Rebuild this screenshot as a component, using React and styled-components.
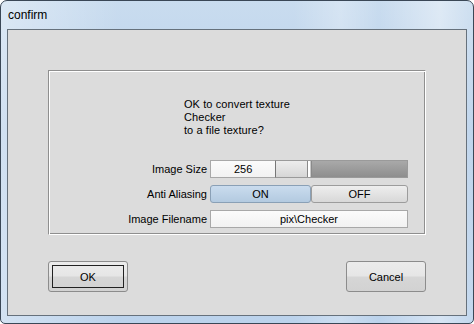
import React from "react";
import styled, { createGlobalStyle } from "styled-components";

const Global = createGlobalStyle`
  html, body { margin: 0; padding: 0; background: #ffffff; }
  body { font-family: "Liberation Sans", Arial, sans-serif; }
  * { box-sizing: border-box; }
`;

const Window = styled.div`
  width: 474px;
  height: 324px;
  display: flex;
  flex-direction: column;
  border: 1px solid #3a4756;
  border-radius: 7px 7px 5px 5px;
  padding: 0 6px 7px 6px;
  background:
    linear-gradient(90deg, rgba(255,255,255,0.35) 0%, rgba(255,255,255,0) 25%, rgba(255,255,255,0) 62%, rgba(255,255,255,0.25) 72%, rgba(255,255,255,0) 80%, rgba(255,255,255,0.4) 93%, rgba(255,255,255,0.1) 100%),
    linear-gradient(180deg, #c9dcef 0%, #b8d0ea 40%, #bcd3ec 100%);
  overflow: hidden;
`;

const TitleBar = styled.div`
  height: 28px;
  display: flex;
  align-items: center;
  padding-left: 1px;
  font-size: 12px;
  color: #000;
`;

const Client = styled.div`
  flex: 1;
  border: 1px solid #66717c;
  background: #dcdcdc;
  padding: 40px 40px 0 40px;
  display: flex;
  flex-direction: column;
`;

const Panel = styled.div`
  height: 165px;
  border: 1px solid #8f8f8f;
  border-right-color: #ffffff;
  border-bottom-color: #ffffff;
  box-shadow: inset 1px 1px 0 #ffffff, inset -1px -1px 0 #8f8f8f;
  padding: 27px 0 0 0;
  display: flex;
  flex-direction: column;
`;

const Message = styled.div`
  align-self: center;
  font-size: 11px;
  line-height: 13px;
  color: #000;
  letter-spacing: 0.1px;
`;

const Form = styled.div`
  margin-top: 23px;
  padding-left: 1px;
  display: grid;
  grid-template-columns: 157px 198px;
  column-gap: 3px;
  row-gap: 7px;
  align-items: center;
`;

const Label = styled.div`
  font-size: 11px;
  text-align: right;
  color: #000;
`;

const Composite = styled.div`
  height: 18px;
  display: flex;
`;

const NumberField = styled.div`
  width: 66px;
  height: 18px;
  border: 1px solid #a8a8a8;
  border-right: 1px solid #777;
  background: linear-gradient(#fbfbfb, #f2f2f2);
  font-size: 11px;
  display: flex;
  align-items: center;
  padding-left: 23px;
`;

const Track = styled.div`
  flex: 1;
  height: 18px;
  display: flex;
  border: 1px solid #9a9a9a;
  border-left: none;
`;

const TrackFill = styled.div`
  width: 31px;
  background: linear-gradient(#ededed, #d6d6d6);
`;

const Thumb = styled.div`
  width: 5px;
  background: linear-gradient(90deg, #8a8a8a 0, #8a8a8a 1px, #ffffff 1px, #ffffff 3px, #c8c8c8 3px, #c8c8c8 4px, #8a8a8a 4px);
`;

const TrackRest = styled.div`
  flex: 1;
  background: linear-gradient(#a9a9a9, #8e8e8e);
`;

const Toggle = styled.div`
  height: 18px;
  display: flex;
`;

const ToggleButton = styled.div`
  flex: ${(p) => (p.$first ? "0 0 101px" : "1")};
  height: 18px;
  border: 1px solid ${(p) => (p.$active ? "#8aa0b6" : "#9c9c9c")};
  border-radius: 3px;
  background: ${(p) =>
    p.$active
      ? "linear-gradient(#cadcee, #b3cae0)"
      : "linear-gradient(#eeeeee, #d8d8d8)"};
  font-size: 11px;
  display: flex;
  align-items: center;
  justify-content: center;
  color: #000;
`;

const TextField = styled.div`
  height: 18px;
  border: 1px solid #a8a8a8;
  background: linear-gradient(#fbfbfb, #f2f2f2);
  font-size: 11px;
  display: flex;
  align-items: center;
  justify-content: center;
  color: #000;
`;

const ButtonRow = styled.div`
  margin-top: 26px;
  display: flex;
  justify-content: space-between;
`;

const Button = styled.div`
  width: 80px;
  height: 31px;
  border: 1px solid #8c8c8c;
  border-radius: 3px;
  background: linear-gradient(#ececec 0%, #e6e6e6 48%, #d6d6d6 52%, #d2d2d2 100%);
  font-size: 11px;
  display: flex;
  align-items: center;
  justify-content: center;
  color: #000;
  outline: ${(p) => (p.$focused ? "1.5px solid #222222" : "none")};
  outline-offset: -5px;
`;

export default function App() {
  return (
    <>
      <Global />
      <Window>
        <TitleBar>confirm</TitleBar>
        <Client>
          <Panel>
            <Message>
              OK to convert texture
              <br />
              Checker
              <br />
              to a file texture?
            </Message>
            <Form>
              <Label>Image Size</Label>
              <Composite>
                <NumberField>256</NumberField>
                <Track>
                  <TrackFill />
                  <Thumb />
                  <TrackRest />
                </Track>
              </Composite>
              <Label>Anti Aliasing</Label>
              <Toggle>
                <ToggleButton $first $active>ON</ToggleButton>
                <ToggleButton>OFF</ToggleButton>
              </Toggle>
              <Label>Image Filename</Label>
              <TextField>pix\Checker</TextField>
            </Form>
          </Panel>
          <ButtonRow>
            <Button $focused>OK</Button>
            <Button>Cancel</Button>
          </ButtonRow>
        </Client>
      </Window>
    </>
  );
}
